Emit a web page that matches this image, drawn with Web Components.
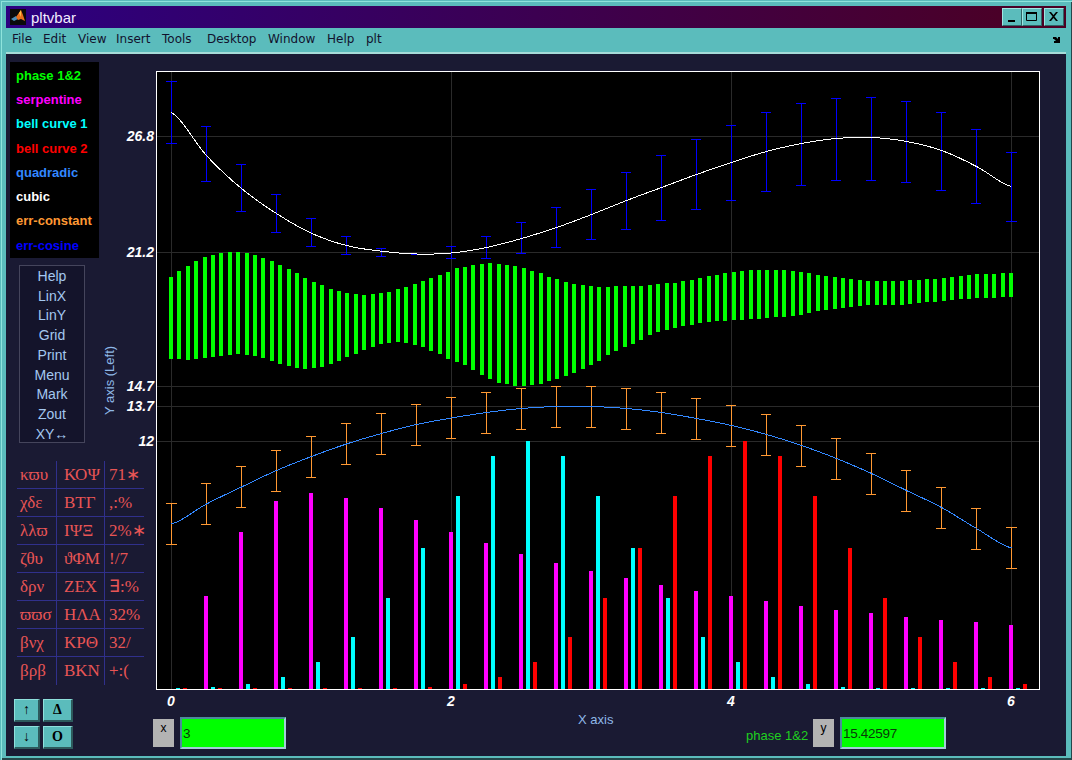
<!DOCTYPE html>
<html>
<head>
<meta charset="utf-8">
<title>pltvbar</title>
<style>
  html, body { margin: 0; padding: 0; background: #1a1a33; }
  body { width: 1072px; height: 760px; overflow: hidden; font-family: "Liberation Sans", Arial, sans-serif; }
</style>
</head>
<body>
<plt-window>
  <plt-titlebar slot="top">pltvbar</plt-titlebar>
  <plt-menubar slot="top"></plt-menubar>
  <plt-sidebar slot="side">
    <plt-legend></plt-legend>
    <plt-commands></plt-commands>
    <plt-symbols></plt-symbols>
    <plt-arrows></plt-arrows>
  </plt-sidebar>
  <plt-chart slot="main"></plt-chart>
  <plt-readouts slot="main"></plt-readouts>
</plt-window>

<script>
class PltWindow extends HTMLElement {
  connectedCallback() {
    this.attachShadow({ mode: 'open' });
    this.shadowRoot.innerHTML = `
      <style>
        :host {
          display: flex;
          flex-direction: column;
          box-sizing: border-box;
          width: 1072px;
          height: 760px;
          padding: 6px 6px 6px 6px;
          background: #5bbcbc;
          box-shadow: inset 1px 1px 0 #5bbcbc, inset 2px 2px 0 #8fe4dc, inset 0 -2px 0 #25474a, inset -1px 0 0 #25474a;
        }
        .client {
          flex: 1;
          display: flex;
          background: #1a1a33;
          margin-bottom: -2px;
          height: 700px;
          min-height: 0;
        }
        .side { width: 94px; flex: none; }
        .main { flex: 1; display: flex; flex-direction: column; min-width: 0; }
      </style>
      <slot name="top"></slot>
      <div class="client">
        <div class="side"><slot name="side"></slot></div>
        <div class="main"><slot name="main"></slot></div>
      </div>
    `;
  }
}

class PltTitlebar extends HTMLElement {
  connectedCallback() {
    this.attachShadow({ mode: 'open' });
    this.shadowRoot.innerHTML = `
      <style>
        :host {
          display: flex;
          align-items: center;
          height: 22px;
          padding: 0 2px 0 4px;
          background: linear-gradient(90deg, #2c0080, #4c0022);
          color: #f2ecff;
          font: 15px "Liberation Sans", Arial, sans-serif;
        }
        svg.logo { width: 16px; height: 16px; margin-right: 5px; }
        .title { flex: 1; }
        .btn {
          box-sizing: border-box;
          width: 20px;
          height: 18px;
          background: #5bbcbc;
          border: 1px solid;
          border-color: #9fe6e2 #2f6466 #2f6466 #9fe6e2;
          display: flex;
          align-items: center;
          justify-content: center;
        }
        .close { margin-left: 2px; }
      </style>
      <svg class="logo" viewBox="0 0 16 16">
        <rect width="16" height="16" fill="#0a0a0a"/>
        <polygon points="1,10 6,7 8,10 4,12" fill="#4d8fb8"/>
        <polygon points="6,8 11,1 13,6 15,12 11,10 8,11" fill="#e8701c"/>
        <polygon points="9,4 11,1 11,8" fill="#ffc247"/>
      </svg>
      <span class="title"><slot></slot></span>
      <div class="btn"><svg width="18" height="16" viewBox="0 0 18 16"><rect x="5" y="11" width="7" height="2" fill="#000"/></svg></div>
      <div class="btn"><svg width="18" height="16" viewBox="0 0 18 16"><path d="M3.5 3.5h10v8h-10z" fill="none" stroke="#000"/><rect x="3" y="3" width="11" height="2" fill="#000"/></svg></div>
      <div class="btn close"><svg width="18" height="16" viewBox="0 0 18 16"><path d="M4 3h2l2.500 3 2.500-3h2l-3.500 4.500 3.500 4.500h-2l-2.500-3-2.500 3h-2l3.500-4.500z" fill="#000"/></svg></div>
    `;
  }
}

class PltMenubar extends HTMLElement {
  connectedCallback() {
    this.attachShadow({ mode: 'open' });
    const items = [['File', 31], ['Edit', 35], ['View', 38], ['Insert', 46], ['Tools', 45], ['Desktop', 61], ['Window', 59], ['Help', 39], ['plt', 30]];
    this.shadowRoot.innerHTML = `
      <style>
        :host {
          display: flex;
          align-items: center;
          box-sizing: border-box;
          height: 26px;
          padding: 0 0 2px 6px;
          background: #5bbcbc;
          border-bottom: 2px solid #a6dcd8;
          color: #12122e;
          font: 12px "DejaVu Sans", sans-serif;
        }
        .dock { margin-left: auto; margin-right: 6px; }
      </style>
      ${items.map(([t, w]) => `<span style="width:${w}px">${t}</span>`).join('')}
      <svg class="dock" width="7" height="7" viewBox="0 0 7 7"><path d="M0 1h3l2 2v-2h2v6h-6v-2h2l-2-2h-1z" fill="#000"/></svg>
    `;
  }
}

class PltSidebar extends HTMLElement {
  connectedCallback() {
    this.attachShadow({ mode: 'open' });
    this.shadowRoot.innerHTML = `
      <style>
        :host { display: flex; flex-direction: column; align-items: flex-start; height: 700px; padding: 8px 0 0 4px; box-sizing: border-box; }
      </style>
      <slot></slot>
    `;
  }
}

class PltLegend extends HTMLElement {
  connectedCallback() {
    this.attachShadow({ mode: 'open' });
    const rows = [['phase 1&amp;2', '#00ff00'], ['serpentine', '#ff00ff'], ['bell curve 1', '#00ffff'], ['bell curve 2', '#ff0000'],
      ['quadradic', '#3388ff'], ['cubic', '#ffffff'], ['err-constant', '#ff9933'], ['err-cosine', '#0000ff']];
    this.shadowRoot.innerHTML = `
      <style>
        :host {
          display: grid;
          grid-auto-rows: 24.3px;
          align-items: center;
          box-sizing: border-box;
          width: 89px;
          height: 196px;
          padding: 1px 0 0 6px;
          background: #000;
          font: bold 13px "Liberation Sans", Arial, sans-serif;
          white-space: nowrap;
        }
      </style>
      ${rows.map(([t, c]) => `<div style="color:${c}">${t}</div>`).join('')}
    `;
  }
}

class PltCommands extends HTMLElement {
  connectedCallback() {
    this.attachShadow({ mode: 'open' });
    const rows = ['Help', 'LinX', 'LinY', 'Grid', 'Print', 'Menu', 'Mark', 'Zout', 'XY↔'];
    this.shadowRoot.innerHTML = `
      <style>
        :host {
          display: grid;
          grid-auto-rows: 19.76px;
          align-items: center;
          justify-items: center;
          box-sizing: border-box;
          width: 66px;
          height: 178px;
          margin: 7px 0 0 9px;
          background: #14142b;
          border: 1px solid #45455c;
          color: #a4c8f0;
          font: 14px "Liberation Sans", Arial, sans-serif;
        }
      </style>
      ${rows.map(t => `<div>${t}</div>`).join('')}
    `;
  }
}

class PltSymbols extends HTMLElement {
  connectedCallback() {
    this.attachShadow({ mode: 'open' });
    const rows = [['κϖυ', 'ΚΟΨ', '71∗'], ['χδε', 'ΒΤΓ', ',:%'], ['λλϖ', 'ΙΨΞ', '2%∗'], ['ζθυ', 'ϑΦΜ', '!/7'],
      ['δρν', 'ΖΕΧ', '∃:%'], ['ϖϖσ', 'ΗΛΑ', '32%'], ['βνχ', 'ΚΡΘ', '32/'], ['βρβ', 'ΒΚΝ', '+:(']];
    this.shadowRoot.innerHTML = `
      <style>
        :host {
          display: grid;
          grid-template-columns: 40px 48px 39px;
          grid-auto-rows: 28px;
          width: 127px;
          margin: 18px 0 0 7px;
          color: #e85555;
          font: 17px "Liberation Serif", "Times New Roman", serif;
        }
        div {
          box-sizing: border-box;
          display: flex;
          align-items: center;
          border-right: 1px solid #30308c;
          border-bottom: 1px solid #30308c;
          padding-left: 3px;
          white-space: nowrap;
        }
        div.b { padding-left: 7px; }
        div.c { border-right: 0; padding-left: 4px; }
        div.last { border-bottom: 0; }
      </style>
      ${rows.map((r, i) => {
        const last = i === rows.length - 1 ? ' last' : '';
        return `<div class="a${last}">${r[0]}</div><div class="b${last}">${r[1]}</div><div class="c${last}">${r[2]}</div>`;
      }).join('')}
    `;
  }
}

class PltArrows extends HTMLElement {
  connectedCallback() {
    this.attachShadow({ mode: 'open' });
    this.shadowRoot.innerHTML = `
      <style>
        :host {
          display: grid;
          grid-template-columns: 26px 30px;
          grid-auto-rows: 23px;
          gap: 4px 3px;
          margin: 14px 0 0 4px;
        }
        div {
          box-sizing: border-box;
          display: flex;
          align-items: center;
          justify-content: center;
          background: #5bbcbc;
          border: 1px solid;
          border-color: #8fe0dc #2d5a5c #2d5a5c #8fe0dc;
          border-width: 1px 2px 2px 1px;
          color: #000;
          font: bold 14px "Liberation Serif", serif;
        }
      </style>
      <div>↑</div><div>Δ</div><div>↓</div><div>Ο</div>
    `;
  }
}

class PltChart extends HTMLElement {
  connectedCallback() {
    this.attachShadow({ mode: 'open' });
    const X = k => 171 + 35 * k;
    const rect = (x, y, w, h, c) => `<rect x="${x}" y="${y}" width="${w}" height="${h}" fill="${c}"/>`;

    // spline through the 25 sample points, pixel-snapped by crispEdges
    const curve = (ys, c) => {
      let pts = [];
      for (let i = 0; i < ys.length - 1; i++) {
        const p0 = ys[Math.max(i - 1, 0)], p1 = ys[i], p2 = ys[i + 1], p3 = ys[Math.min(i + 2, ys.length - 1)];
        for (let s = 0; s < 8; s++) {
          const t = s / 8;
          const y = 0.5 * (2 * p1 + (p2 - p0) * t + (2 * p0 - 5 * p1 + 4 * p2 - p3) * t * t + (3 * p1 - p0 - 3 * p2 + p3) * t * t * t);
          pts.push((X(i) + 35 * t + 0.5) + ',' + (y + 0.5).toFixed(2));
        }
      }
      pts.push((X(24) + 0.5) + ',' + (ys[24] + 0.5));
      return `<polyline points="${pts.join(' ')}" fill="none" stroke="${c}" stroke-width="1"/>`;
    };

    const errbar = (k, top, bot, c) => {
      const hw = (k === 0 || k === 24) ? 5 : 5;
      const w = (k === 0 || k === 24) ? 11 : 10;
      return rect(X(k), top, 1, bot - top, c) + rect(X(k) - hw, top, w, 1, c) + rect(X(k) - hw, bot, w, 1, c);
    };

    let s = rect(156, 71, 884, 619, '#000');

    // grid
    const grid = '#2a2a2a';
    [136, 252, 386, 406, 441].forEach(y => { s += rect(157, y, 882, 1, grid); });
    [0, 8, 16, 24].forEach(k => { s += rect(X(k), 72, 1, 617, grid); });

    // phase 1&2 bars
    const gTop = [111, 93, 78, 63, 51, 45, 39, 36, 36, 39, 45, 54, 63, 75, 87, 99, 114, 126, 135, 147, 153, 159, 162, 165, 162, 159, 156, 147, 141, 132, 123, 114, 105, 96].map(v => 240 + v / 3);
    const gBot = [357, 357, 360, 357, 354, 351, 348, 345, 342, 345, 348, 354, 363, 372, 378, 384, 387, 384, 381, 372, 363, 351, 342, 330, 321, 312, 309, 306, 309, 315, 321, 333, 342, 357].map(v => 240 + v / 3);
    const gTopR = [268, 265, 264, 263, 264, 265, 267, 270, 273, 277, 280, 283, 285, 286, 287, 287, 286, 286, 286, 285, 284, 283, 282, 280, 278, 276, 274, 272, 271, 270, 270, 270, 270, 271, 272, 273, 275, 276, 278, 279, 280, 281, 281, 281, 281, 280, 280, 279, 278, 277, 276, 275, 274, 274, 273, 273];
    const gBotR = [362, 368, 374, 379, 383, 385, 386, 385, 384, 381, 378, 375, 371, 365, 360, 354, 349, 345, 340, 335, 331, 329, 327, 325, 323, 322, 321, 320, 320, 319, 319, 318, 317, 316, 315, 313, 311, 309, 308, 307, 306, 305, 305, 305, 305, 304, 303, 302, 301, 300, 299, 299, 298, 298, 297, 297];
    const lookup = (arr, x) => {
      const f = (x - 460) / 10;
      const i = Math.max(0, Math.min(arr.length - 2, Math.floor(f)));
      return arr[i] + (arr[i + 1] - arr[i]) * Math.max(0, f - i);
    };
    for (let i = 0; i <= 100; i++) {
      const x = Math.round(169 + 8.4 * i);
      const t = i < gTop.length ? gTop[i] : Math.round(lookup(gTopR, x + 2));
      const b = i < gBot.length ? gBot[i] : Math.round(lookup(gBotR, x + 2));
      s += rect(x, t, 4, b - t, '#00ff00');
    }

    // stems
    const magenta = [null, 596, 532, 501, 493, 498, 508, 520, 532, 543, 554, 563, 571, 578, 585, 591, 596, 601, 606, 610, 613, 617, 620, 622, 625];
    const bell = [688, 687, 684, 677, 662, 637, 598, 548, 496, 456, 441, 456, 496, 548, 598, 637, 662, 677, 684, 687, 688, 688, 688, 688, 688];
    const red = [688, 688, 688, 688, 688, 688, 688, 687, 684, 677, 662, 637, 598, 548, 496, 456, 441, 456, 496, 548, 598, 637, 662, 677, 684];
    for (let k = 0; k <= 24; k++) {
      if (magenta[k]) s += rect(X(k) - 2, magenta[k], 4, 689 - magenta[k], '#ff00ff');
      s += rect(X(k) + 5, bell[k], 4, 689 - bell[k], '#00ffff');
      s += rect(X(k) + 12, red[k], 4, 689 - red[k], '#ff0000');
    }

    // cosine error bars and cubic
    const errTop = [81, 126, 164, 194, 218, 236, 248, 254, 246, 236, 222, 207, 189, 172, 155, 139, 125, 112, 103, 98, 97, 101, 112, 129, 152];
    const errBot = [143, 181, 211, 232, 246, 254, 256, 254, 258, 258, 253, 247, 239, 229, 220, 209, 200, 191, 185, 180, 180, 182, 190, 203, 221];
    errTop.forEach((t, k) => { s += errbar(k, t, errBot[k], '#0000ff'); });
    s += curve([112, 155, 188, 213, 232.7, 245, 250.7, 253.5, 252.5, 247, 238, 227, 214, 200, 187, 174, 162, 151, 143, 138, 137, 141, 150, 166, 186], '#ffffff');

    // constant error bars and quadratic
    const quad = [523.5, 503.5, 486.5, 470, 456, 443.5, 433, 424, 417.5, 412, 408, 406, 406, 408, 412, 418, 425, 434, 445, 458, 473, 490, 507, 528, 547.5];
    quad.forEach((y, k) => { s += errbar(k, Math.round(y - 20.5), Math.round(y + 20.5), '#ff9933'); });
    s += curve(quad, '#3388ff');

    // frame
    s += rect(156, 71, 884, 1, '#fff') + rect(156, 689, 884, 1, '#fff') + rect(156, 71, 1, 619, '#fff') + rect(1039, 71, 1, 619, '#fff');

    // tick labels
    const ticks = [['26.8', 141], ['21.2', 257], ['14.7', 391], ['13.7', 411], ['12', 446]]
      .map(([t, y]) => `<text class="tick" x="154" y="${y}" text-anchor="end">${t}</text>`).join('');
    const xticks = [['0', 171], ['2', 451], ['4', 731], ['6', 1011]]
      .map(([t, x]) => `<text class="tick" x="${x}" y="706" text-anchor="middle">${t}</text>`).join('');

    this.shadowRoot.innerHTML = `
      <style>
        :host { display: block; height: 658px; flex: none; }
        svg { display: block; }
        .plot { shape-rendering: crispEdges; }
        .tick { font: italic bold 14px "Liberation Sans", Arial, sans-serif; fill: #fff; }
        .axis { font: 13px "Liberation Sans", Arial, sans-serif; fill: #8fb8e8; }
      </style>
      <svg width="966" height="658" viewBox="100 54 966 658">
        <g class="plot">${s}</g>
        ${ticks}${xticks}
        <text class="axis" transform="translate(114 415) rotate(-90)">Y axis (Left)</text>
      </svg>
    `;
  }
}

class PltReadouts extends HTMLElement {
  connectedCallback() {
    this.attachShadow({ mode: 'open' });
    this.shadowRoot.innerHTML = `
      <style>
        :host {
          display: flex;
          align-items: flex-start;
          height: 42px;
          padding-left: 53px;
          font: 13px "Liberation Sans", Arial, sans-serif;
        }
        .tag {
          box-sizing: border-box;
          width: 21px;
          height: 28px;
          margin: 7px 6px 0 0;
          padding-top: 3px;
          background: #b3b3b3;
          color: #000;
          text-align: center;
          font-size: 12px;
          line-height: 12px;
        }
        .field {
          box-sizing: border-box;
          width: 106px;
          height: 32px;
          margin-top: 5px;
          padding-left: 1px;
          display: flex;
          align-items: center;
          background: #00ff00;
          border: 2px solid;
          border-color: #4d8a9a #a2cdd8 #a2cdd8 #4d8a9a;
          color: #063;
          color: #0a3a0a;
          font-size: 13.5px;
          letter-spacing: -0.3px;
        }
        .xlab { width: 36px; margin: 0 132px 0 292px; color: #8fb8e8; white-space: nowrap; }
        .name { width: 67px; margin-top: 16px; color: #1fd01f; white-space: nowrap; }
      </style>
      <div class="tag">x</div>
      <div class="field">3</div>
      <div class="xlab">X axis</div>
      <div class="name">phase 1&amp;2</div>
      <div class="tag">y</div>
      <div class="field">15.42597</div>
    `;
  }
}

customElements.define('plt-window', PltWindow);
customElements.define('plt-titlebar', PltTitlebar);
customElements.define('plt-menubar', PltMenubar);
customElements.define('plt-sidebar', PltSidebar);
customElements.define('plt-legend', PltLegend);
customElements.define('plt-commands', PltCommands);
customElements.define('plt-symbols', PltSymbols);
customElements.define('plt-arrows', PltArrows);
customElements.define('plt-chart', PltChart);
customElements.define('plt-readouts', PltReadouts);
</script>
</body>
</html>
